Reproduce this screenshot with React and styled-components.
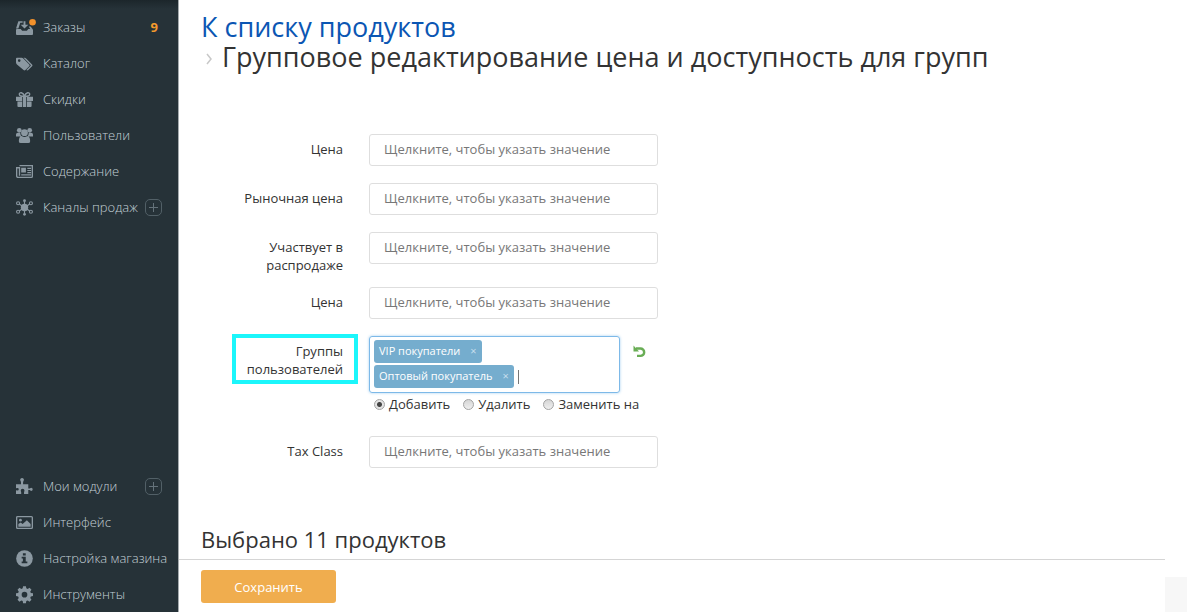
import React from 'react';
import styled, { createGlobalStyle } from 'styled-components';

const GlobalStyle = createGlobalStyle`
  *, *::before, *::after { box-sizing: border-box; }
  body {
    margin: 0;
    background: #fff;
    color: #333;
    font: 13px/18px "Open Sans", "Noto Sans", sans-serif;
  }
  button, input { font: inherit; }
  a { text-decoration: none; }
`;

const Page = styled.div`
  display: flex;
  min-height: 100vh;
`;

const Sidebar = styled.nav`
  flex: none;
  width: 179px;
  padding: 9px 0 0;
  display: flex;
  flex-direction: column;
  justify-content: space-between;
  background: linear-gradient(#1c262b, #263238 9px);
  border-right: 1px solid #a5abae;
`;

const MenuList = styled.ul`
  list-style: none;
  margin: 0;
  padding: 0;
`;

const MenuItem = styled.li`
  display: flex;
  align-items: center;
  height: 36px;
  padding: 0 12px 0 16px;
`;

const MenuLink = styled.a`
  display: flex;
  align-items: center;
  gap: 10px;
  flex: 1;
  color: #c3d0d6;
  font-weight: 300;
  white-space: nowrap;
`;

const MenuIcon = styled.svg`
  flex: none;
  width: 17px;
  height: 17px;
  overflow: visible;
  color: #8b98a1;
  fill: currentColor;
`;

const Count = styled.span`
  margin-right: 8px;
  color: #f39a2d;
  font-weight: 700;
`;

const AddButton = styled.button`
  flex: none;
  display: flex;
  align-items: center;
  justify-content: center;
  width: 17px;
  height: 17px;
  margin-right: 4px;
  padding: 0;
  border: 1px solid #526067;
  border-radius: 5px;
  background: none;
  color: #64727a;
`;

const Main = styled.main`
  flex: 1;
  min-width: 0;
  display: flex;
  flex-direction: column;
  margin-right: 36px;
`;

const Header = styled.header`
  padding: 12px 22px 0;
`;

const Title = styled.h1`
  margin: 0;
  font-size: 27px;
  line-height: 30px;
  font-weight: 400;
`;

const BackLink = styled.a`
  display: block;
  color: #0b56b3;
`;

const Current = styled.span`
  display: flex;
  align-items: center;
  gap: 10px;
`;

const Chevron = styled.svg`
  width: 6px;
  height: 12px;
  margin: 4px 0 0 5px;
  fill: none;
  stroke: #c8c8c8;
  stroke-width: 1.5;
`;

const Form = styled.form`
  flex: 1;
  display: flex;
  flex-direction: column;
`;

const Fields = styled.div`
  display: flex;
  flex-direction: column;
  gap: 13px;
  padding: 62px 0 20px 53px;
`;

const Row = styled.div`
  display: flex;
  align-items: flex-start;
  min-height: 36px;
`;

const Label = styled.label`
  flex: none;
  width: 126px;
  margin-right: 11px;
  padding: 6px 15px 0 12px;
  text-align: right;
`;

const MarkedLabel = styled(Label)`
  margin-top: -2px;
  padding: 4px 11px 2px 8px;
  border: 4px solid #1cf6fb;
`;

const TextInput = styled.input`
  width: 289px;
  height: 32px;
  padding: 0 14px 2px;
  border: 1px solid #dedede;
  border-radius: 3px;
  background: #fff;
  color: #333;
  outline: none;
  &::placeholder { color: #777; opacity: 1; }
`;

const GroupControl = styled.div`
  display: flex;
  flex-direction: column;
  gap: 2px;
  padding-bottom: 10px;
`;

const PickerLine = styled.div`
  display: flex;
  align-items: flex-start;
  gap: 13px;
`;

const TagBox = styled.div`
  display: flex;
  flex-wrap: wrap;
  align-items: center;
  gap: 1px 4px;
  width: 251px;
  padding: 3px 4px 4px;
  border: 1px solid #7db9e8;
  border-radius: 3px;
  box-shadow: 0 0 3px #a5d0f0;
`;

const Tag = styled.span`
  display: flex;
  align-items: center;
  gap: 10px;
  height: 23px;
  padding: 0 5px 2px;
  border-radius: 3px;
  background: #75adce;
  color: #fff;
  font-size: 11px;
`;

const RemoveButton = styled.button`
  display: flex;
  padding: 0;
  border: 0;
  background: none;
  color: #c5deed;
`;

const Break = styled.span`
  flex-basis: 100%;
`;

const TagInput = styled.input`
  width: 60px;
  height: 14px;
  padding: 0;
  border: 0;
  border-left: 1px solid #777;
  outline: none;
  background: none;
`;

const ResetButton = styled.button`
  display: flex;
  margin-top: 9px;
  padding: 0;
  border: 0;
  background: none;
  svg { width: 13px; height: 13px; }
`;

const Options = styled.div`
  display: flex;
  gap: 13px;
  padding-left: 5px;
`;

const Option = styled.label`
  display: flex;
  align-items: center;
  gap: 4px;
`;

const Radio = styled.input`
  appearance: none;
  width: 11px;
  height: 11px;
  margin: 0;
  border: 1px solid #a3a3a3;
  border-radius: 50%;
  background: linear-gradient(#d6d6d6, #efefef);
  &:checked { background: radial-gradient(circle, #444 0 2px, #e4e4e4 3px); }
`;

const Footer = styled.footer`
  margin-top: auto;
`;

const Summary = styled.h2`
  margin: 0;
  padding: 0 22px 5px;
  border-bottom: 1px solid #d5d5d5;
  font-size: 22px;
  line-height: 30px;
  font-weight: 400;
`;

const SaveBar = styled.div`
  padding: 10px 22px 9px;
`;

const SaveButton = styled.button`
  width: 135px;
  height: 33px;
  padding: 0;
  border: 0;
  border-radius: 3px;
  background: #f0ad4e;
  color: #fff;
`;

const ScrollTab = styled.div`
  position: fixed;
  right: 14px;
  bottom: 0;
  width: 22px;
  height: 35px;
  background: #f7f7f7;
`;

const icons = {
  orders: (
    <>
      <path d="M1 10.500h4l1.500 2h5l1.500-2h4q1 0 1 1V16q0 1-1 1H1q-1 0-1-1v-4.500q0-1 1-1z" />
      <path d="M0 10 2.500 2.500H7V4H4.500L2.500 10zM13.500 8l1.500 2.500h2.500L15.500 8z" />
      <path d="M8 2.500h2V6h3L9 10 5 6h3z" />
      <circle cx="17.500" cy="3.500" r="3.500" fill="#f2912b" />
    </>
  ),
  tags: (
    <>
      <path fillRule="evenodd" d="M0 4q0-1 1-1h5q1 0 2 1l6 6q1 1 0 2l-4 4q-1 1-2 0L1 10q-1-1-1-2zM3.400 4.500a1.400 1.400 0 1 0 0 2.800 1.400 1.400 0 0 0 0-2.800z" />
      <path d="M8 3h1q1 0 2 1l6 6q1 1 0 2l-4 4q-1 1-2 0l4.500-4.500q.5-.5 0-1z" />
    </>
  ),
  gift: (
    <>
      <path d="M0 6h6.500v4.500H0zM11.500 6H18v4.500h-6.500zM1.500 11h5v6H2.500q-1 0-1-1zM11.500 11h5v5q0 1-1 1h-4zM7.300 6h3.400v11H7.300z" />
      <path d="M9 5.500C7.500 1 3.500 1 3.500 3.500S7 5.500 9 5.500zm0 0C10.500 1 14.500 1 14.500 3.500S11 5.500 9 5.500z" fill="none" stroke="currentColor" strokeWidth="1.500" />
    </>
  ),
  users: (
    <>
      <circle cx="3.500" cy="3.500" r="2.500" />
      <circle cx="14.500" cy="3.500" r="2.500" />
      <circle cx="9" cy="6" r="3.600" />
      <path d="M0 10V8q0-2 2-2h2.500q0 2.500 1.500 4zM18 10V8q0-2-2-2h-2.500q0 2.500-1.500 4zM3 15q0-5 3-5.500 3 2 6 0 3 .5 3 5.500 0 2-2 2H5q-2 0-2-2z" />
    </>
  ),
  news: (
    <>
      <path d="M3.700 2.700h13.600v11.600q0 1-1 1H2.200q-1.500 0-1.500-1.500V5h3v8.500" fill="none" stroke="currentColor" strokeWidth="1.400" />
      <path d="M5.500 5h5v5h-5zM12 5h4v1.300h-4zM12 7.300h4v1.300h-4zM12 9.500h4v1.300h-4zM5.500 12H16v1.300H5.500z" />
    </>
  ),
  channels: (
    <>
      <circle cx="9" cy="9" r="3.900" />
      <path d="M9 9V2.500M9 9v6.500M9 9 3 5M9 9l6-4M9 9l-6 4M9 9l6 4" fill="none" stroke="currentColor" strokeWidth="1.200" />
      <circle cx="9" cy="1.800" r="1.500" />
      <circle cx="9" cy="16.200" r="1.500" />
      <g fill="#263238" stroke="currentColor" strokeWidth="1.200">
        <circle cx="2.200" cy="4.500" r="1.600" />
        <circle cx="15.800" cy="4.500" r="1.600" />
        <circle cx="2.200" cy="13.500" r="1.600" />
        <circle cx="15.800" cy="13.500" r="1.600" />
      </g>
    </>
  ),
  puzzle: (
    <path d="M0 6.500h5.300V4.200L4.500 2.500a2 2 0 1 1 3.800 0L7.500 4.200v2.300H13v4.700h1.500l1.500-.9a1.700 1.700 0 1 1 0 3.400l-1.500-.9H13V17H8.500v-1.800l.5-1.700a2 2 0 0 0-4 0l.5 1.700V17H0v-4l1.500.3a1.400 1.400 0 0 0 0-2.800L0 10.800z" />
  ),
  image: (
    <>
      <rect x=".7" y="2.700" width="16.600" height="12.600" rx="1" fill="none" stroke="currentColor" strokeWidth="1.400" />
      <circle cx="4.700" cy="6.500" r="1.500" />
      <path d="M2.500 13.500v-3L5 9l2 1.500 4.500-4 4 4v3z" />
    </>
  ),
  info: (
    <>
      <circle cx="9" cy="9" r="8.800" />
      <path d="M7.300 3.500h3v2.300h-3zM6 7.200h4.300v5H12V14H6v-1.800h1.300V9H6z" fill="#263238" />
    </>
  ),
  gear: (
    <path fillRule="evenodd" d="M7.500.2h3l.4 2.300 1.500.6 1.900-1.300 2.100 2.100-1.300 1.900.6 1.500 2.300.4v3l-2.300.4-.6 1.500 1.300 1.900-2.100 2.100-1.900-1.300-1.500.6-.4 2.300h-3l-.4-2.300-1.500-.6-1.900 1.300L1.600 14.500l1.300-1.900-.6-1.500L0 10.700v-3l2.300-.4.6-1.500-1.300-1.900 2.100-2.100 1.900 1.300 1.500-.6zM9 6.200a3 3 0 1 0 0 6 3 3 0 0 0 0-6z" />
  ),
};

const topMenu = [
  { icon: 'orders', text: 'Заказы', count: 9 },
  { icon: 'tags', text: 'Каталог' },
  { icon: 'gift', text: 'Скидки' },
  { icon: 'users', text: 'Пользователи' },
  { icon: 'news', text: 'Содержание' },
  { icon: 'channels', text: 'Каналы продаж', add: true },
];

const bottomMenu = [
  { icon: 'puzzle', text: 'Мои модули', add: true },
  { icon: 'image', text: 'Интерфейс' },
  { icon: 'info', text: 'Настройка магазина' },
  { icon: 'gear', text: 'Инструменты' },
];

function Menu({ items }) {
  return (
    <MenuList>
      {items.map(({ icon, text, count, add }) => (
        <MenuItem key={text}>
          <MenuLink href="#">
            <MenuIcon viewBox="0 0 18 18" aria-hidden="true">{icons[icon]}</MenuIcon>
            {text}
          </MenuLink>
          {count && <Count>{count}</Count>}
          {add && (
            <AddButton type="button" aria-label={`Добавить: ${text}`}>
              <svg width="9" height="9" viewBox="0 0 9 9" stroke="currentColor">
                <path d="M4.500 0v9M0 4.500h9" />
              </svg>
            </AddButton>
          )}
        </MenuItem>
      ))}
    </MenuList>
  );
}

function Field({ id, label }) {
  return (
    <Row>
      <Label htmlFor={id}>{label}</Label>
      <TextInput id={id} type="text" placeholder="Щелкните, чтобы указать значение" />
    </Row>
  );
}

function GroupTag({ children }) {
  return (
    <Tag>
      {children}
      <RemoveButton type="button" aria-label={`Убрать: ${children}`}>×</RemoveButton>
    </Tag>
  );
}

export default function App() {
  return (
    <>
      <GlobalStyle />
      <Page>
        <Sidebar>
          <Menu items={topMenu} />
          <Menu items={bottomMenu} />
        </Sidebar>
        <Main>
          <Header>
            <Title>
              <BackLink href="#">К списку продуктов</BackLink>
              <Current>
                <Chevron viewBox="0 0 6 12" aria-hidden="true"><path d="M1 1l4 5-4 5" /></Chevron>
                Групповое редактирование цена и доступность для групп
              </Current>
            </Title>
          </Header>
          <Form onSubmit={(e) => e.preventDefault()}>
            <Fields>
              <Field id="price" label="Цена" />
              <Field id="market-price" label="Рыночная цена" />
              <Field id="on-sale" label="Участвует в распродаже" />
              <Field id="sale-price" label="Цена" />
              <Row>
                <MarkedLabel htmlFor="groups">Группы пользователей</MarkedLabel>
                <GroupControl>
                  <PickerLine>
                    <TagBox>
                      <GroupTag>VIP покупатели</GroupTag>
                      <Break />
                      <GroupTag>Оптовый покупатель</GroupTag>
                      <TagInput id="groups" type="text" />
                    </TagBox>
                    <ResetButton type="button" aria-label="Сбросить">
                      <svg viewBox="0 0 13 13" fill="none" stroke="#69ad55" strokeWidth="2.400">
                        <path d="M3 3.500h4.500a3.700 3.700 0 0 1 0 7.400H4" />
                        <path d="M.5.500v6h5.500z" fill="#69ad55" stroke="none" />
                      </svg>
                    </ResetButton>
                  </PickerLine>
                  <Options role="radiogroup" aria-label="Действие">
                    <Option><Radio type="radio" name="mode" defaultChecked />Добавить</Option>
                    <Option><Radio type="radio" name="mode" />Удалить</Option>
                    <Option><Radio type="radio" name="mode" />Заменить на</Option>
                  </Options>
                </GroupControl>
              </Row>
              <Field id="tax-class" label="Tax Class" />
            </Fields>
            <Footer>
              <Summary>Выбрано 11 продуктов</Summary>
              <SaveBar>
                <SaveButton type="submit">Сохранить</SaveButton>
              </SaveBar>
            </Footer>
          </Form>
        </Main>
        <ScrollTab />
      </Page>
    </>
  );
}
